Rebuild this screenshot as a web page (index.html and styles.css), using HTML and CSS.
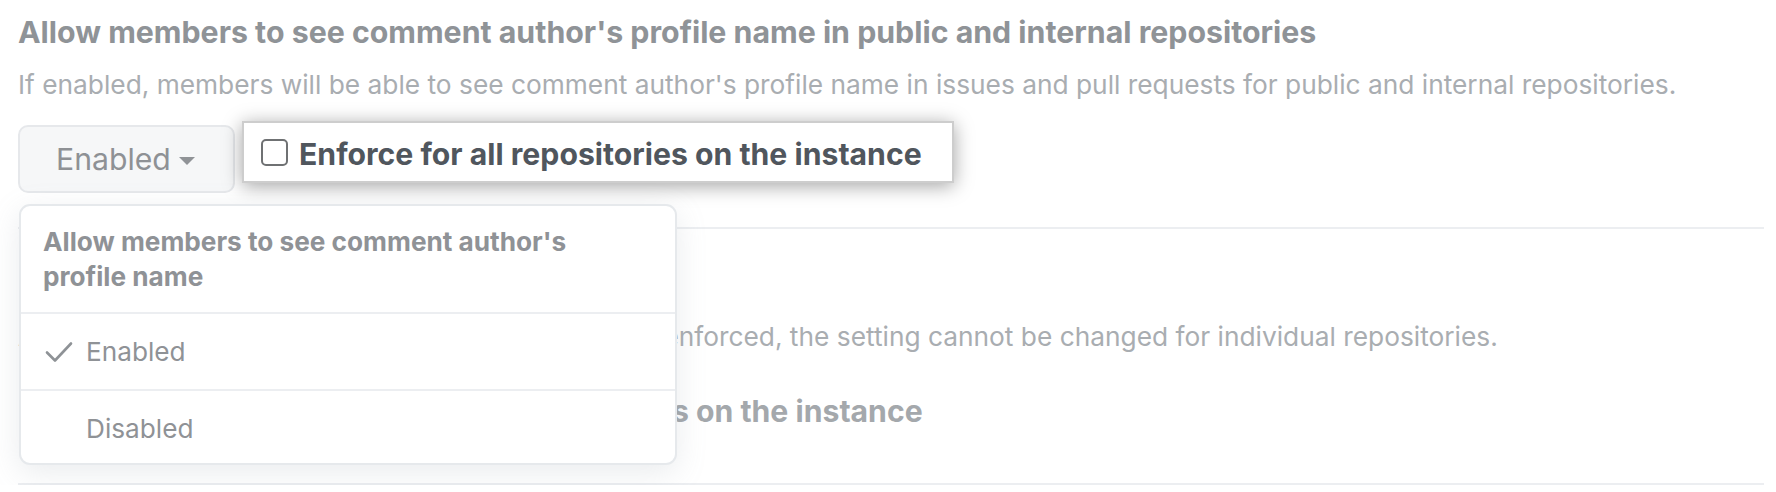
FILE: index.html
```html
<!DOCTYPE html>
<html lang="en">
<head>
<meta charset="utf-8">
<title>Comment author profile name setting</title>
<link rel="stylesheet" href="styles.css">
</head>
<body>
<div class="page">
  <section class="setting">
    <h3 class="setting-title">Allow members to see comment author's profile name in public and internal repositories</h3>
    <p class="setting-note">If enabled, members will be able to see comment author's profile name in issues and pull requests for public and internal repositories.</p>
    <div class="controls">
      <div class="select-wrap">
        <button class="btn-select" type="button">Enabled<span class="caret"></span></button>
        <div class="menu">
          <div class="menu-header">Allow members to see comment author's profile name</div>
          <div class="menu-item">
            <svg class="menu-check" width="28" height="22" viewBox="0 0 28 22"><polyline points="2,11.5 10,19.5 26,2.5" fill="none" stroke="#8e9296" stroke-width="2.6" stroke-linecap="round" stroke-linejoin="round"/></svg>
            <span>Enabled</span>
          </div>
          <div class="menu-item">
            <span class="menu-check"></span>
            <span>Disabled</span>
          </div>
        </div>
      </div>
      <div class="enforce-pop">
        <span class="cbx"></span>
        <span class="enforce-text">Enforce for all repositories on the instance</span>
      </div>
    </div>
  </section>
  <section class="setting setting-second">
    <p class="setting-note">Admins can toggle the setting per repository. When enforced, the setting cannot be changed for individual repositories.</p>
    <div class="enforce-row">
      <span class="cbx cbx-faded"></span>
      <span>Enforce for all repositories on the instance</span>
    </div>
  </section>
</div>
</body>
</html>
```
FILE: styles.css
```css
* { box-sizing: border-box; }

body {
  margin: 0;
  background: #ffffff;
  font-family: Inter, "Liberation Sans", sans-serif;
}

.page {
  padding: 0 12px 0 18px;
}

.setting {
  border-bottom: 2px solid #eceef1;
  padding: 14px 0 34px;
}

.setting-title {
  margin: 0;
  font-size: 30.3px;
  line-height: 36px;
  font-weight: 700;
  color: #8f9397;
}

.setting-note {
  margin: 19px 0 0;
  font-size: 26.3px;
  line-height: 32px;
  color: #a9adb1;
}

.controls {
  display: flex;
  align-items: flex-start;
  gap: 7px;
  margin-top: 20px;
}

.select-wrap {
  position: relative;
  margin-top: 4px;
}

.btn-select {
  display: flex;
  align-items: center;
  height: 68px;
  width: 217px;
  padding: 0 0 0 36px;
  background: #f6f7f8;
  border: 2px solid #e6e8eb;
  border-radius: 10px;
  font-family: Inter, "Liberation Sans", sans-serif;
  font-size: 30.2px;
  color: #8e9195;
}

.caret {
  margin-left: 8px;
  margin-top: 3px;
  border-top: 8px solid #909397;
  border-left: 8px solid transparent;
  border-right: 8px solid transparent;
}

.menu {
  position: absolute;
  top: 79px;
  left: 1px;
  width: 658px;
  background: #ffffff;
  border: 2px solid #e6e9ec;
  border-radius: 11px;
  box-shadow: 0 8px 30px rgba(140, 149, 159, 0.18);
  z-index: 2;
}

.menu-header {
  padding: 18px 60px 18px 22px;
  font-size: 26.2px;
  line-height: 35px;
  font-weight: 700;
  color: #8f9296;
  border-bottom: 2px solid #eceef1;
}

.menu-item {
  display: flex;
  align-items: center;
  gap: 13px;
  height: 75px;
  padding-left: 24px;
  font-size: 26.2px;
  color: #8f9296;
}

.menu-item + .menu-item {
  border-top: 2px solid #eceef1;
  height: 74px;
  padding-top: 2px;
}

.menu-check {
  display: block;
  width: 28px;
  height: 22px;
  flex: none;
}

.enforce-pop {
  display: flex;
  align-items: center;
  gap: 11px;
  height: 62px;
  padding: 0 30px 0 17px;
  background: #ffffff;
  border: 2px solid #cdcdcd;
  box-shadow: 0 3px 18px rgba(0, 0, 0, 0.36);
  position: relative;
  z-index: 1;
}

.cbx {
  display: block;
  width: 27px;
  height: 27px;
  border: 2px solid #6f7173;
  border-radius: 5px;
  background: #ffffff;
  flex: none;
}

.enforce-text {
  font-size: 30.2px;
  font-weight: 700;
  color: #50565d;
  line-height: 36px;
  padding-top: 4px;
}

.setting-second {
  padding: 92px 0 54px;
}

.setting-second .setting-note {
  margin: 0;
}

.enforce-row {
  display: flex;
  align-items: center;
  gap: 11px;
  margin: 36px 0 0 244px;
  height: 40px;
  padding-top: 3px;
  font-size: 30.2px;
  font-weight: 700;
  color: #a4a8ac;
}

.cbx-faded {
  border-color: #c4c6c8;
}
```
